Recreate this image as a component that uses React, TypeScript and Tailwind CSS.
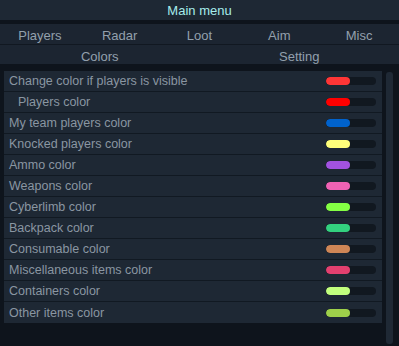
const rows: { label: string; color: string; indent?: boolean }[] = [
  { label: "Change color if players is visible", color: "#ff3636" },
  { label: "Players color", color: "#ff0000", indent: true },
  { label: "My team players color", color: "#0062cc" },
  { label: "Knocked players color", color: "#ffff7a" },
  { label: "Ammo color", color: "#a152e0" },
  { label: "Weapons color", color: "#f062b4" },
  { label: "Cyberlimb color", color: "#84ff44" },
  { label: "Backpack color", color: "#33d17f" },
  { label: "Consumable color", color: "#cf8656" },
  { label: "Miscellaneous items color", color: "#e3406f" },
  { label: "Containers color", color: "#c2ff7e" },
  { label: "Other items color", color: "#9ed04a" },
];

const tabs = ["Players", "Radar", "Loot", "Aim", "Misc"];

export default function App() {
  return (
    <div
      className="w-[399px] h-[346px] bg-[#0e141c] overflow-hidden flex flex-col"
      style={{ fontFamily: '"Liberation Sans", Arial, sans-serif' }}
    >
      <div className="h-5 pt-px bg-[#1e2834] flex items-center justify-center text-[13px] text-[#a6ecec]">
        Main menu
      </div>
      <div className="h-1" />
      <div className="h-[21px] pt-[2px] bg-[#1c2531] grid grid-cols-5 border-b border-[#111821]">
        {tabs.map((t) => (
          <div key={t} className="flex items-center justify-center text-[13px] text-[#93a0ad]">
            {t}
          </div>
        ))}
      </div>
      <div className="h-[19px] pt-[2px] bg-[#1c2531] grid grid-cols-2">
        <div className="flex items-center justify-center text-[13px] text-[#93a0ad]">Colors</div>
        <div className="flex items-center justify-center text-[13px] text-[#93a0ad]">Setting</div>
      </div>
      <div className="flex flex-1 pt-[7px] pl-1">
        <div className="w-[378px] self-start bg-[#1e2834]">
          {rows.map((r, i) => (
            <div
              key={r.label}
              className={`h-[21px] flex items-center pr-[6px] ${i < rows.length - 1 ? "border-b border-[#111922]" : ""}`}
            >
              <span
                className={`flex-1 pt-px text-[12.5px] text-[#8a96a2] ${r.indent ? "pl-[14px]" : "pl-[5px]"}`}
              >
                {r.label}
              </span>
              <div className="w-[50px] h-2 rounded-full bg-[#111820] overflow-hidden">
                <div className="w-6 h-2 rounded-full" style={{ background: r.color }} />
              </div>
            </div>
          ))}
        </div>
        <div className="ml-1 mt-px mb-[2px] w-[7px] rounded-[3px] bg-[#1f2935]" />
      </div>
    </div>
  );
}
